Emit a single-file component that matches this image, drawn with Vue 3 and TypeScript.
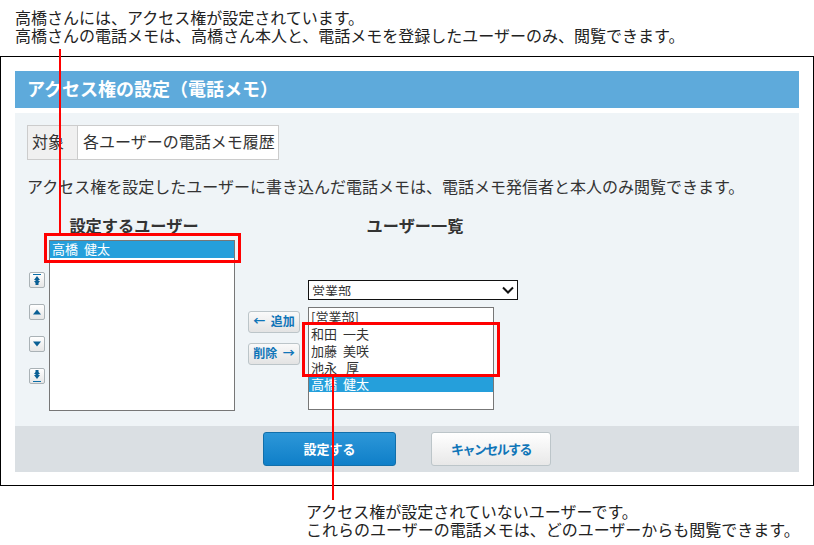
<script setup lang="ts">
const users = ['和田 一夫', '加藤 美咲', '池永\u2002\u2009厚']
</script>

<template>
  <div class="page">
    <p class="note note-top">高橋さんには、アクセス権が設定されています。<br />高橋さんの電話メモは、高橋さん本人と、電話メモを登録したユーザーのみ、閲覧できます。</p>
    <div class="frame">
      <h1 class="title">アクセス権の設定（電話メモ）</h1>
      <div class="body">
        <table class="target">
          <tbody>
            <tr><th>対象</th><td>各ユーザーの電話メモ履歴</td></tr>
          </tbody>
        </table>
        <p class="desc">アクセス権を設定したユーザーに書き込んだ電話メモは、電話メモ発信者と本人のみ閲覧できます。</p>
        <div class="picker">
          <div class="col-left">
            <h2 class="head">設定するユーザー</h2>
            <div class="left-row">
              <div class="moves">
                <button class="mv"><svg width="10" height="12" viewBox="0 0 10 12"><path d="M1 .5h8" stroke="#0a6ea8" fill="none"/><path d="M5 2 8 6H6.500V7H8L6.500 9V11H3.500V9L2 7H3.500V6H2Z" fill="#0a5f94"/></svg></button>
                <button class="mv"><svg width="10" height="8" viewBox="0 0 10 8"><path d="M5 1.500 9 6.500H1Z" fill="#0a5f94"/></svg></button>
                <button class="mv"><svg width="10" height="8" viewBox="0 0 10 8"><path d="M5 6.500 9 1.500H1Z" fill="#0a5f94"/></svg></button>
                <button class="mv"><svg width="10" height="12" viewBox="0 0 10 12"><path d="M3.500 0H6.500V2L8 4H6.500V5H8L5 9 2 5H3.500V4H2L3.500 2Z" fill="#0a5f94"/><path d="M1 11.500h8" stroke="#0a6ea8" fill="none"/></svg></button>
              </div>
              <div class="list list-left">
                <div class="row sel">高橋 健太</div>
              </div>
            </div>
          </div>
          <div class="transfer">
            <button class="tr">← 追加</button>
            <button class="tr">削除 →</button>
          </div>
          <div class="col-right">
            <h2 class="head">ユーザー一覧</h2>
            <select class="dept"><option>営業部</option></select>
            <div class="list list-right">
              <div class="row">[営業部]</div>
              <div v-for="u in users" :key="u" class="row">{{ u }}</div>
              <div class="row sel last">高橋 健太</div>
            </div>
          </div>
        </div>
      </div>
      <div class="actions">
        <button class="primary">設定する</button>
        <button class="cancel">キャンセルする</button>
      </div>
    </div>
    <p class="note note-bottom">アクセス権が設定されていないユーザーです。<br />これらのユーザーの電話メモは、どのユーザーからも閲覧できます。</p>

    <div class="mark box-a"></div>
    <div class="mark box-b"></div>
    <div class="mark line-a"></div>
    <div class="mark line-b"></div>
  </div>
</template>

<style>
html, body { margin: 0; background: #fff; }
</style>

<style scoped>
.page {
  position: relative;
  width: 814px;
  height: 545px;
  overflow: hidden;
  font-family: "Noto Sans CJK JP", "Noto Sans", sans-serif;
  color: #333;
}
p, h1, h2 { margin: 0; }
.note {
  font-size: 16px;
  line-height: 18px;
  color: #222;
  white-space: nowrap;
}
.note-top { padding: 8px 0 0 15px; height: 56px; box-sizing: border-box; }
.frame {
  height: 430px;
  box-sizing: border-box;
  border: 1px solid #000;
  padding: 14px 14px 13px;
  display: flex;
  flex-direction: column;
}
.title {
  height: 37px;
  line-height: 34px;
  background: #5eaadb;
  color: #fff;
  font-size: 18px;
  font-weight: 700;
  padding-left: 12px;
  margin-bottom: 5px;
}
.body {
  flex: 1;
  background: #eff4f7;
  padding: 12px 12px 0;
  min-height: 0;
}
.target {
  border-collapse: collapse;
  font-size: 16px;
  background: #fff;
}
.target th, .target td {
  border: 1px solid #ccc;
  height: 30px;
  padding: 0 3px 3px 5px;
  font-weight: 400;
  white-space: nowrap;
}
.target th { background: #f0f0f0; padding: 0 13px 3px 4px; }
.desc {
  font-size: 16px;
  line-height: 22px;
  margin-top: 15px;
  white-space: nowrap;
}
.picker { display: flex; margin-top: 18px; }
.head {
  font-size: 16.2px;
  line-height: 20px;
  font-weight: 700;
  text-align: center;
}
.col-left { width: 208px; }
.col-left .head { width: 170px; margin-left: 22px; margin-bottom: 5px; }
.left-row { display: flex; gap: 4px; }
.moves {
  width: 18px;
  padding: 32px 0 0 2px;
  box-sizing: border-box;
  display: flex;
  flex-direction: column;
  gap: 16px;
}
.mv {
  width: 16px;
  height: 16px;
  padding: 0;
  border: 1px solid #aab2b6;
  border-radius: 2px;
  background: linear-gradient(#fff, #e6e6e6);
  display: flex;
  align-items: center;
  justify-content: center;
}
.list {
  box-sizing: border-box;
  border: 1px solid #777;
  background: #fff;
  font-size: 13px;
  line-height: 15px;
  word-spacing: 3px;
}
.list-left { width: 186px; height: 171px; }
.row {
  height: 17px;
  padding-left: 2px;
  white-space: nowrap;
}
.sel { background: #259fdb; color: #fff; }
.last { height: 15px; line-height: 13px; }
.transfer {
  margin: 96px 8px 0 13px;
  width: 52px;
  display: flex;
  flex-direction: column;
  gap: 10px;
}
.tr {
  width: 52px;
  height: 22px;
  padding: 0 0 3px;
  box-sizing: border-box;
  border: 1px solid #bcc5c9;
  border-radius: 3px;
  background: linear-gradient(#fafafa, #e3e3e3);
  color: #0f75b8;
  font-family: inherit;
  font-size: 12px;
  font-weight: 700;
  word-spacing: 3px;
  white-space: nowrap;
}
.col-right { width: 210px; display: flex; flex-direction: column; align-items: flex-start; }
.col-right .head { width: 100%; height: 20px; margin-left: 2px; }
.dept {
  appearance: none;
  width: 210px;
  height: 20px;
  margin-top: 45px;
  box-sizing: border-box;
  border: 1px solid #111;
  background: #fff url("data:image/svg+xml,%3Csvg xmlns='http://www.w3.org/2000/svg' width='12' height='8'%3E%3Cpath d='M1 1.500 6 6.500 11 1.500' fill='none' stroke='%23111' stroke-width='2'/%3E%3C/svg%3E") no-repeat right 3px center;
  font-family: inherit;
  font-size: 13px;
  color: #333;
  padding: 0 0 3px 3px;
  border-radius: 0;
}
.list-right { width: 186px; height: 103px; margin-top: 7px; padding-top: 1px; }
.actions {
  height: 46px;
  background: #dadfe3;
  display: flex;
  align-items: center;
  padding-left: 248px;
  gap: 35px;
}
.primary, .cancel {
  height: 34px;
  box-sizing: border-box;
  border-radius: 3px;
  font-family: inherit;
  font-size: 13px;
  font-weight: 700;
  padding: 0 0 2px;
}
.primary {
  width: 133px;
  border: 1px solid #126faa;
  background: linear-gradient(#2d97d8, #0f7fc8);
  color: #fff;
}
.cancel {
  width: 120px;
  border: 1px solid #bcc5c9;
  background: linear-gradient(#fff, #e8e8e8);
  color: #0f75b8;
  letter-spacing: -1.6px;
}
.note-bottom { padding: 16px 0 0 306px; }

.mark { position: absolute; box-sizing: border-box; }
.box-a { left: 44px; top: 233px; width: 197px; height: 30px; border: 3px solid #f00; }
.box-b { left: 302px; top: 322px; width: 198px; height: 55px; border: 3px solid #f00; }
.line-a { left: 59px; top: 49px; width: 2px; height: 185px; background: #f00; }
.line-b { left: 332px; top: 377px; width: 2px; height: 123px; background: #f00; }
</style>
